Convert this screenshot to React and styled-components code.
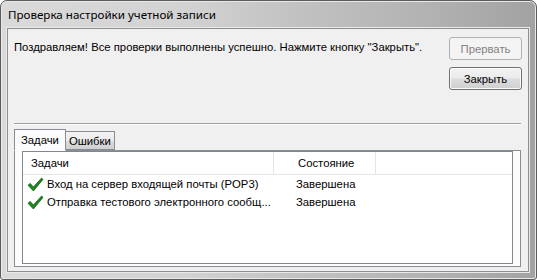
import React from 'react';
import styled, { createGlobalStyle } from 'styled-components';

const Global = createGlobalStyle`
  html, body {
    margin: 0;
    padding: 0;
    background: #ffffff;
  }
  body {
    font-family: "Liberation Sans", Arial, sans-serif;
    font-size: 11.3px;
    color: #000;
  }
`;

const Window = styled.div`
  width: 537px;
  height: 280px;
  box-sizing: border-box;
  display: flex;
  flex-direction: column;
  border: 1px solid #5c5c5c;
  border-radius: 7px 7px 3px 3px;
  background: linear-gradient(90deg, #dadada 0%, #d2d2d2 35%, #c2c2c2 55%, #b2b2b2 80%, #a2a2a2 100%);
  box-shadow: inset 0 0 0 1px #e8e8e8;
  overflow: hidden;
`;

const TitleBar = styled.div`
  height: 27px;
  display: flex;
  align-items: center;
  padding-left: 7px;
  padding-bottom: 1px;
  box-sizing: border-box;
  font-family: "Noto Sans", "Liberation Sans", sans-serif;
  font-size: 11.6px;
  color: #000;
`;

const Client = styled.div`
  flex: 1;
  margin: 0 7px 7px 6px;
  background: #f0f0f0;
  border: 1px solid #8e8e8e;
  box-shadow: 0 0 0 1px #eaeaea;
  display: flex;
  flex-direction: column;
  padding: 0 6px 4px 6px;
`;

const TopRow = styled.div`
  display: flex;
  justify-content: space-between;
  padding-top: 8px;
  height: 86px;
`;

const Message = styled.div`
  padding-top: 4px;
`;

const Buttons = styled.div`
  display: flex;
  flex-direction: column;
  gap: 7px;
`;

const Button = styled.div`
  width: 73px;
  height: 23px;
  box-sizing: border-box;
  display: flex;
  align-items: center;
  justify-content: center;
  border-radius: 3px;
  border: 1px solid ${p => (p.disabled ? '#adb2b5' : '#707070')};
  color: ${p => (p.disabled ? '#838383' : '#000')};
  background: ${p =>
    p.disabled
      ? '#f4f4f4'
      : 'linear-gradient(180deg, #f2f2f2 0%, #ebebeb 48%, #dddddd 52%, #cfcfcf 100%)'};
  box-shadow: inset 0 0 0 1px ${p => (p.disabled ? '#f4f4f4' : '#fbfbfb')};
`;

const Divider = styled.div`
  height: 1px;
  background: #a0a0a0;
  border-bottom: 1px solid #ffffff;
  margin: 0 1px 3px 0;
`;

const TabStrip = styled.div`
  display: flex;
  align-items: flex-end;
  height: 22px;
  position: relative;
  z-index: 1;
`;

const Tab = styled.div`
  box-sizing: border-box;
  height: ${p => (p.active ? '22px' : '19px')};
  padding: 0 ${p => (p.active ? '6px' : '3px')};
  display: flex;
  align-items: center;
  border: 1px solid #898c95;
  border-bottom: ${p => (p.active ? '1px solid #fcfcfc' : '1px solid #898c95')};
  border-left: ${p => (p.active ? '1px solid #898c95' : 'none')};
  background: ${p =>
    p.active ? '#fcfcfc' : 'linear-gradient(180deg, #f2f2f2 0%, #ebebeb 50%, #dddddd 51%, #cfcfcf 100%)'};
  margin-bottom: ${p => (p.active ? '-1px' : '0')};
`;

const Panel = styled.div`
  flex: 1;
  background: #fcfcfc;
  border: 1px solid #898c95;
  padding: 0 7px 2px 7px;
  display: flex;
  margin-right: 1px;
`;

const List = styled.div`
  flex: 1;
  background: #ffffff;
  border: 1px solid #828790;
  display: flex;
  flex-direction: column;
`;

const HeaderRow = styled.div`
  display: flex;
  height: 22px;
  border-bottom: 1px solid #e5e5e5;
`;

const HeaderCell = styled.div`
  width: ${p => p.w}px;
  box-sizing: border-box;
  display: flex;
  align-items: center;
  padding-left: ${p => p.pl}px;
  border-right: 1px solid #e5e5e5;
`;

const Row = styled.div`
  display: flex;
  height: 18px;
  align-items: center;
`;

const Cell = styled.div`
  width: ${p => p.w}px;
  box-sizing: border-box;
  display: flex;
  align-items: center;
  padding-left: ${p => p.pl}px;
  white-space: nowrap;
`;

const Check = () => (
  <svg width="17" height="15" viewBox="0 0 17 15" style={{ marginRight: 3 }}>
    <path d="M1 8.2 L3.2 6.4 L6.4 10 L14.6 1 L16 2.4 L6.4 14 Z" fill="#1c8a1c" stroke="#0b560b" strokeWidth="0.7" strokeLinejoin="round" />
  </svg>
);

const rows = [
  { name: 'Вход на сервер входящей почты (POP3)', state: 'Завершена' },
  { name: 'Отправка тестового электронного сообщ...', state: 'Завершена' },
];

export default function App() {
  return (
    <>
      <Global />
      <Window>
        <TitleBar>Проверка настройки учетной записи</TitleBar>
        <Client>
          <TopRow>
            <Message>Поздравляем! Все проверки выполнены успешно. Нажмите кнопку "Закрыть".</Message>
            <Buttons>
              <Button disabled>Прервать</Button>
              <Button>Закрыть</Button>
            </Buttons>
          </TopRow>
          <Divider />
          <TabStrip>
            <Tab active>Задачи</Tab>
            <Tab>Ошибки</Tab>
          </TabStrip>
          <Panel>
            <List>
              <HeaderRow>
                <HeaderCell w={251} pl={8}>Задачи</HeaderCell>
                <HeaderCell w={102} pl={24}>Состояние</HeaderCell>
              </HeaderRow>
              {rows.map(r => (
                <Row key={r.name}>
                  <Cell w={251} pl={4}><Check />{r.name}</Cell>
                  <Cell w={102} pl={22}>{r.state}</Cell>
                </Row>
              ))}
            </List>
          </Panel>
        </Client>
      </Window>
    </>
  );
}
